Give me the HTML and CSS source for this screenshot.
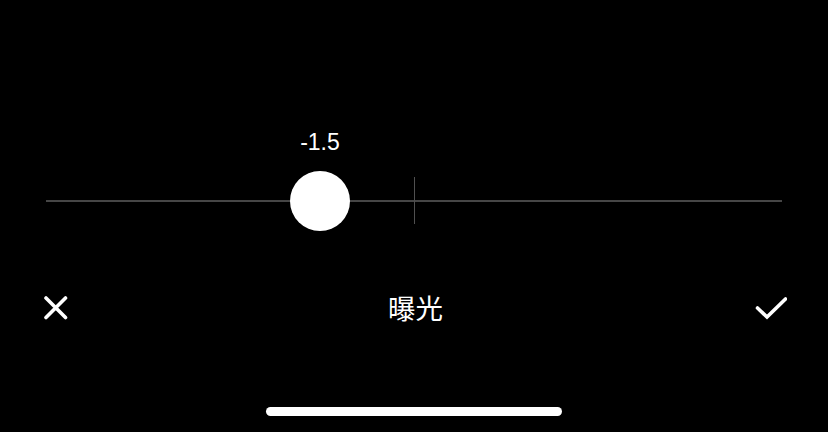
FILE: index.html
```html
<!DOCTYPE html>
<html lang="zh">
<head>
<meta charset="utf-8">
<title>曝光</title>
<link rel="stylesheet" href="styles.css">
</head>
<body>
<div class="screen">
  <div class="slider">
    <div class="track"></div>
    <div class="tick"></div>
    <div class="thumb" style="left: 37.23%;">
      <div class="value">-1.5</div>
      <div class="knob"></div>
    </div>
  </div>
  <div class="toolbar">
    <div class="btn btn-cancel">
      <svg width="24" height="24" viewBox="0 0 24 24"><path d="M2 2 L21.5 21.5 M21.5 2 L2 21.5" stroke="#fff" stroke-width="3.6" stroke-linecap="round" fill="none"/></svg>
    </div>
    <div class="title">曝光</div>
    <div class="btn btn-ok">
      <svg width="32" height="24" viewBox="0 0 32 24"><path d="M2.5 12 L12 21 L30.5 3" stroke="#fff" stroke-width="3.6" stroke-linecap="round" stroke-linejoin="miter" fill="none"/></svg>
    </div>
  </div>
  <div class="home-indicator"></div>
</div>
</body>
</html>
```

FILE: styles.css
```css
html, body {
  margin: 0;
  padding: 0;
  background: #000;
}

.screen {
  width: 828px;
  height: 432px;
  box-sizing: border-box;
  padding-top: 171px;
  display: flex;
  flex-direction: column;
  background: #000;
  color: #fff;
  font-family: "Liberation Sans", "Noto Sans CJK SC", sans-serif;
}

.slider {
  position: relative;
  margin: 0 46px;
  height: 60px;
  display: flex;
  align-items: center;
}

.track {
  flex: 1;
  height: 2px;
  background: #464646;
}

.tick {
  position: absolute;
  left: 50%;
  top: 6px;
  width: 1px;
  height: 47px;
  margin-left: -0.5px;
  background: #505050;
}

.thumb {
  position: absolute;
  top: -42px;
  transform: translateX(-50%);
  display: flex;
  flex-direction: column;
  align-items: center;
  gap: 16px;
}

.value {
  font-size: 23px;
  line-height: 26px;
  color: #fff;
  white-space: nowrap;
}

.knob {
  width: 60px;
  height: 60px;
  border-radius: 50%;
  background: #fff;
}

.toolbar {
  margin-top: 55px;
  height: 44px;
  display: grid;
  grid-template-columns: 1fr auto 1fr;
  align-items: center;
  padding: 0 41px 0 44px;
}

.btn {
  display: flex;
  align-items: center;
}

.btn svg {
  display: block;
}

.btn-ok {
  justify-content: flex-end;
}

.title {
  font-family: "Noto Sans CJK SC", sans-serif;
  font-size: 27.5px;
  line-height: 44px;
  margin-top: -2px;
  color: #fff;
}

.home-indicator {
  align-self: center;
  margin-top: 77px;
  width: 296px;
  height: 9px;
  border-radius: 5px;
  background: #fff;
}
```
